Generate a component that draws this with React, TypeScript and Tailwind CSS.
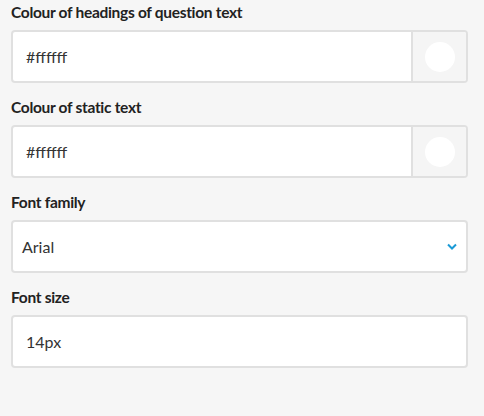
import React from "react";

const font = { fontFamily: "Lato, 'Open Sans', sans-serif" };

const Label = ({ children }: { children: React.ReactNode }) => (
  <div className="text-[15.5px] font-bold text-[#222] leading-[18px] mb-[9px] tracking-[-0.3px]">{children}</div>
);

const ColourField = ({ label, value }: { label: string; value: string }) => (
  <div className="mb-[15px]">
    <Label>{label}</Label>
    <div className="flex h-[53px] border-2 border-[#e0e0e0] rounded-[4px] bg-white overflow-hidden">
      <div className="flex-1 flex items-center pl-[13px] text-[16px] text-[#333]">{value}</div>
      <div className="w-[55px] border-l-2 border-[#e0e0e0] bg-[#f5f5f5] flex items-center justify-center">
        <div className="w-[30px] h-[30px] rounded-full bg-white" />
      </div>
    </div>
  </div>
);

export default function App() {
  return (
    <div className="w-[484px] h-[416px] bg-[#f6f6f6] pl-[11px] pr-[16px] pt-[3px]" style={font}>
      <ColourField label="Colour of headings of question text" value="#ffffff" />
      <ColourField label="Colour of static text" value="#ffffff" />

      <div className="mb-[15px]">
        <Label>Font family</Label>
        <div className="flex items-center justify-between h-[53px] border-2 border-[#e0e0e0] rounded-[4px] bg-white pl-[9px] pr-[9px]">
          <span className="text-[16px] text-[#333]">Arial</span>
          <svg width="10" height="7" viewBox="0 0 10 7" fill="none">
            <path d="M1 1.5 L5 5.5 L9 1.5" stroke="#1a9ad6" strokeWidth="2" />
          </svg>
        </div>
      </div>

      <div>
        <Label>Font size</Label>
        <div className="flex items-center h-[53px] border-2 border-[#e0e0e0] rounded-[4px] bg-white pl-[13px]">
          <span className="text-[16px] text-[#333]">14px</span>
        </div>
      </div>
    </div>
  );
}
